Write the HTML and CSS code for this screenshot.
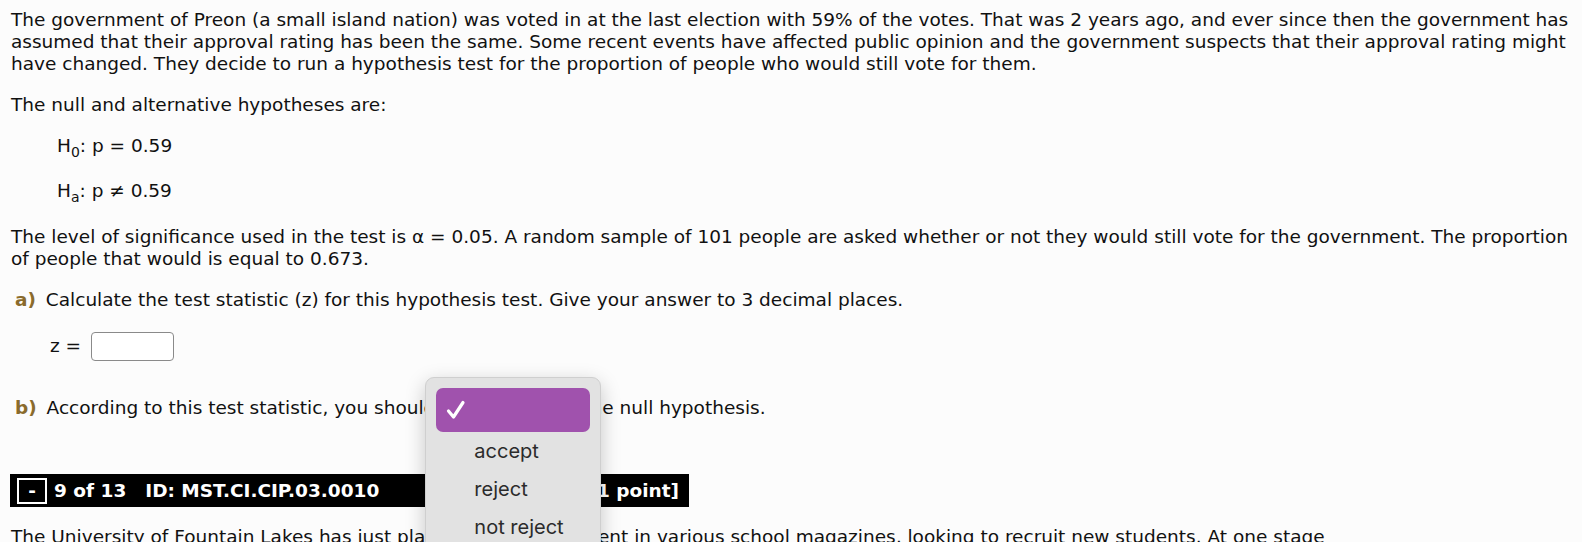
FILE: index.html
```html
<!DOCTYPE html>
<html>
<head>
<meta charset="utf-8">
<link rel="stylesheet" href="styles.css">
</head>
<body>
<div class="page">
  <p class="intro">The government of Preon (a small island nation) was voted in at the last election with 59% of the votes. That was 2 years ago, and ever since then the government has assumed that their approval rating has been the same. Some recent events have affected public opinion and the government suspects that their approval rating might have changed. They decide to run a hypothesis test for the proportion of people who would still vote for them.</p>
  <p class="lead">The null and alternative hypotheses are:</p>
  <p class="hyp">H<sub>0</sub>: p = 0.59</p>
  <p class="hyp hyp-alt">H<sub>a</sub>: p ≠ 0.59</p>
  <p class="sig">The level of significance used in the test is α = 0.05. A random sample of 101 people are asked whether or not they would still vote for the government. The proportion of people that would is equal to 0.673.</p>
  <p class="part"><span class="label">a)</span> Calculate the test statistic (z) for this hypothesis test. Give your answer to 3 decimal places.</p>
  <div class="answer"><span class="var">z =</span><span class="box"></span></div>
  <p class="part part-b"><span class="label">b)</span> According to this test statistic, you should<span class="select"><span class="menu"><span class="opt sel"><svg class="check" width="20" height="20" viewBox="0 0 20 20"><path d="M2.5 11 L7.5 17 L17 2.5" fill="none" stroke="#fff" stroke-width="3.2" stroke-linecap="round" stroke-linejoin="round"/></svg></span><span class="opt">accept</span><span class="opt">reject</span><span class="opt">not reject</span></span></span>the null hypothesis.</p>
  <div class="bar"><span class="toggle">-</span><span class="qnum">9 of 13</span><span class="qid">ID: MST.CI.CIP.03.0010</span><span class="pts">[1 point]</span></div>
  <p class="next">The University of Fountain Lakes has just placed an advertisement in various school magazines, looking to recruit new students. At one stage<br>they had 87% of students applying being accepted. Recently they feel that this number may have changed.</p>
</div>
</body>
</html>
```
FILE: styles.css
```css
html, body {
  margin: 0;
  padding: 0;
  background: #fcfcfc;
}
body {
  font-family: "DejaVu Sans", Verdana, sans-serif;
  font-size: 18.5px;
  line-height: 22px;
  color: #111;
  overflow: hidden;
}
.page {
  padding: 9px 11px 0 11px;
}
p {
  margin: 0;
}
.intro {
  margin: 0;
}
.lead {
  margin-top: 19px;
}
.hyp {
  margin-top: 19px;
  padding-left: 46px;
}
.hyp-alt {
  margin-top: 23px;
}
sub {
  font-size: 14px;
  line-height: 0;
  vertical-align: -5px;
}
.sig {
  margin-top: 24px;
}
.part {
  margin-top: 19px;
  padding-left: 4px;
}
.label {
  color: #8a6b2c;
  font-weight: bold;
  margin-right: 4px;
}
.answer {
  margin-top: 20px;
  padding-left: 39px;
  display: flex;
  align-items: center;
  gap: 10px;
  height: 30px;
}
.box {
  display: inline-block;
  width: 81px;
  height: 27px;
  border: 1px solid #8a8a8a;
  border-radius: 4px;
  background: #fff;
}
.part-b {
  margin-top: 36px;
}
.select {
  position: relative;
  display: inline-block;
  width: 148px;
  height: 20px;
  vertical-align: middle;
}
.menu {
  position: absolute;
  left: -10px;
  top: -22px;
  width: 154px;
  padding: 10px;
  display: flex;
  flex-direction: column;
  background: #e2e2e2;
  border: 1px solid #cfcfcf;
  border-radius: 9px;
  box-shadow: 0 6px 20px rgba(0,0,0,0.22);
  font-family: Inter, "Liberation Sans", sans-serif;
  font-size: 20px;
  color: #2b2b2b;
}
.opt {
  height: 38px;
  line-height: 38px;
  padding-left: 38px;
}
.sel {
  height: 44px;
  background: #a052ad;
  border-radius: 7px;
  padding-left: 10px;
  display: flex;
  align-items: center;
}
.bar {
  margin-top: 55px;
  margin-left: -1px;
  width: 679px;
  height: 33px;
  background: #000;
  color: #fff;
  font-weight: bold;
  display: flex;
  align-items: center;
  padding-left: 7px;
  box-sizing: border-box;
}
.toggle {
  display: inline-block;
  width: 26px;
  height: 22px;
  border: 2px solid #fff;
  text-align: center;
  line-height: 22px;
  margin-right: 7px;
}
.qid {
  margin-left: 19px;
}
.pts {
  margin-left: auto;
  margin-right: 10px;
}
.next {
  margin-top: 19px;
}
```
